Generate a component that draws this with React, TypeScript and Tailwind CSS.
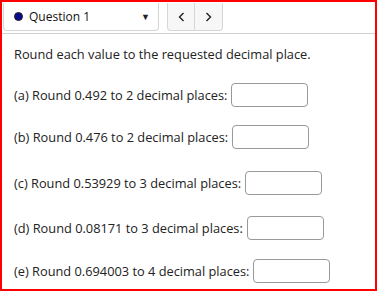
import React from "react";

const rows = [
  { label: "(a) Round 0.492 to 2 decimal places:", mt: "mt-[20px]" },
  { label: "(b) Round 0.476 to 2 decimal places:", mt: "mt-[18px]" },
  { label: "(c) Round 0.53929 to 3 decimal places:", mt: "mt-[22px]" },
  { label: "(d) Round 0.08171 to 3 decimal places:", mt: "mt-[21px]" },
  { label: "(e) Round 0.694003 to 4 decimal places:", mt: "mt-[19px]" },
];

export default function App() {
  return (
    <div
      className="w-[377px] h-[291px] border-2 border-[#ff0000] bg-white text-[#222] overflow-hidden"
      style={{ fontFamily: '"Open Sans", "Noto Sans", sans-serif' }}
    >
      {/* Header */}
      <div className="flex items-end h-[32px] border-b border-[#d0d0d0] pl-[1px]">
        <div className="flex items-center w-[156px] h-[28px] border border-t-0 border-[#d6d6d6] rounded-b-[4px] mb-[2px] pl-[10px] pr-[8px]">
          <span className="w-[9px] h-[9px] rounded-full bg-[#0a0a8c] border border-[#222]" />
          <span className="ml-[6px] text-[12px] text-[#111]">Question 1</span>
          <span className="ml-auto text-[9px] text-[#222]">▼</span>
        </div>
        <div className="flex ml-[8px] mb-[2px] h-[28px] border border-t-0 border-[#d6d6d6] rounded-b-[4px] bg-[#f7f7f7]">
          <div className="w-[27px] flex items-center justify-center border-r border-[#d6d6d6] text-[#222]">
            <svg width="7" height="10" viewBox="0 0 7 10">
              <path d="M5.5 1 L1.5 5 L5.5 9" fill="none" stroke="#222" strokeWidth="1.4" />
            </svg>
          </div>
          <div className="w-[27px] flex items-center justify-center text-[#222]">
            <svg width="7" height="10" viewBox="0 0 7 10">
              <path d="M1.5 1 L5.5 5 L1.5 9" fill="none" stroke="#222" strokeWidth="1.4" />
            </svg>
          </div>
        </div>
      </div>

      {/* Body */}
      <div className="px-[12px] pt-[11px] text-[12.8px]">
        <div className="leading-[18px]">Round each value to the requested decimal place.</div>
        {rows.map((r) => (
          <div key={r.label} className={`flex items-center ${r.mt}`}>
            <span className="leading-[18px]">{r.label}</span>
            <input
              type="text"
              className="ml-[4px] w-[77px] h-[24px] border border-[#999] rounded-[4px] bg-white outline-none"
            />
          </div>
        ))}
      </div>
    </div>
  );
}
